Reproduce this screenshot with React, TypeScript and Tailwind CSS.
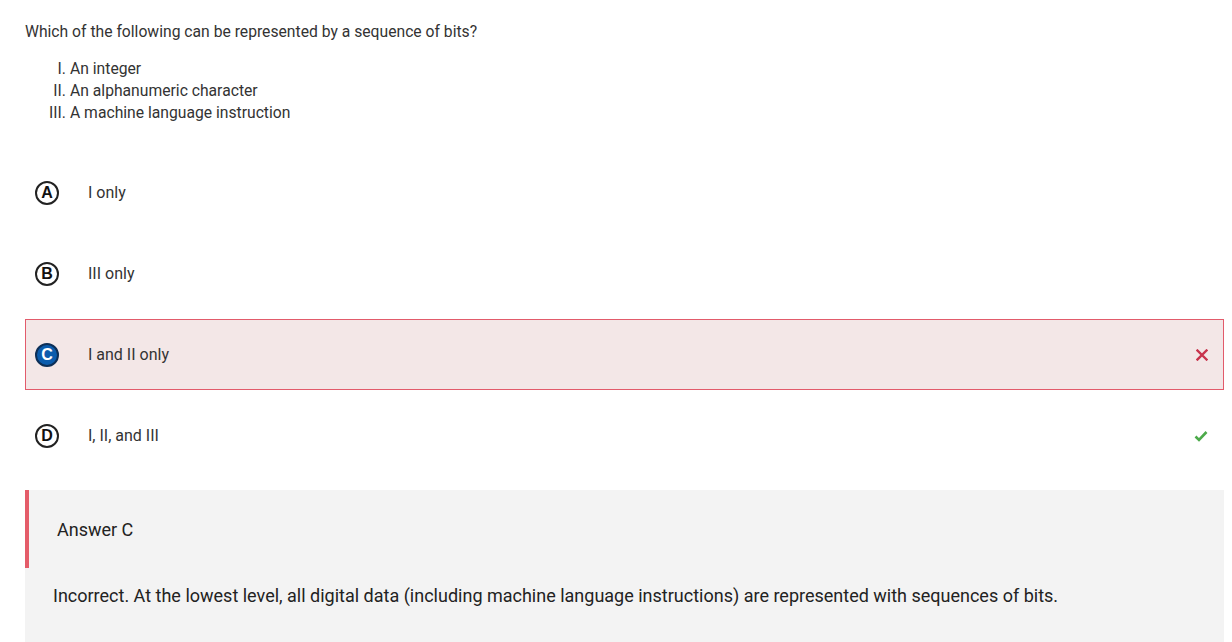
import React from "react";

type Option = {
  letter: string;
  text: string;
  selected?: boolean;
  mark?: "wrong" | "right";
};

const options: Option[] = [
  { letter: "A", text: "I only" },
  { letter: "B", text: "III only" },
  { letter: "C", text: "I and II only", selected: true, mark: "wrong" },
  { letter: "D", text: "I, II, and III", mark: "right" },
];

const statements = [
  { num: "I.", text: "An integer" },
  { num: "II.", text: "An alphanumeric character" },
  { num: "III.", text: "A machine language instruction" },
];

function LetterBadge({ letter, selected }: { letter: string; selected?: boolean }) {
  return (
    <div
      className={
        selected
          ? "w-[24px] h-[24px] rounded-full bg-[#0b5cad] border-2 border-[#0d2f57] flex items-center justify-center text-white font-bold text-[16px] shrink-0"
          : "w-[24px] h-[24px] rounded-full bg-white border-2 border-[#222] flex items-center justify-center text-[#111] font-bold text-[16px] shrink-0"
      }
      style={{ fontFamily: "'Liberation Sans', Arial, sans-serif" }}
    >
      {letter}
    </div>
  );
}

export default function App() {
  return (
    <div className="bg-white min-h-[642px] w-[1232px] overflow-hidden" style={{ fontFamily: "Roboto, 'Liberation Sans', sans-serif" }}>
      <div className="ml-[25px] w-[1199px] pt-[21px]">
        {/* Question */}
        <p className="text-[15.7px] leading-[22px] text-[#333]">
          Which of the following can be represented by a sequence of bits?
        </p>

        <div className="mt-[15px] text-[15.7px] leading-[22px] text-[#333]">
          {statements.map((s) => (
            <div key={s.num} className="flex">
              <span className="w-[41px] text-right">{s.num}</span>
              <span className="ml-[4px]">{s.text}</span>
            </div>
          ))}
        </div>

        {/* Options */}
        <div className="mt-[33px] flex flex-col gap-[10px]">
          {options.map((o) => (
            <div
              key={o.letter}
              className={
                o.selected
                  ? "h-[71px] flex items-center pl-[10px] pr-[16px] ring-1 ring-inset ring-[#e25b6b] bg-[#f3e7e7]"
                  : "h-[71px] flex items-center pl-[10px] pr-[16px]"
              }
            >
              <LetterBadge letter={o.letter} selected={o.selected} />
              <span className="ml-[29px] text-[16px] text-[#333]">{o.text}</span>
              <div className="ml-auto">
                {o.mark === "wrong" && (
                  <svg width="12" height="12" viewBox="0 0 12 12">
                    <path d="M1.5 1.5 L10.5 10.5 M10.5 1.5 L1.5 10.5" stroke="#c8334c" strokeWidth="2.4" strokeLinecap="square" />
                  </svg>
                )}
                {o.mark === "right" && (
                  <svg width="14" height="12" viewBox="0 0 14 12">
                    <path d="M1.5 6.5 L5 10 L12.5 2" stroke="#4caa4a" strokeWidth="2.6" fill="none" />
                  </svg>
                )}
              </div>
            </div>
          ))}
        </div>

        {/* Answer */}
        <div className="mt-[19px] bg-[#f3f3f3] pb-[40px]">
          <div className="h-[78px] border-l-4 border-[#e45c69] flex items-center pl-[28px]">
            <span className="text-[18px] text-[#222]">Answer C</span>
          </div>
          <p className="pl-[28px] pt-[14px] text-[18px] text-[#222]">
            Incorrect. At the lowest level, all digital data (including machine language instructions) are represented with sequences of bits.
          </p>
        </div>
      </div>
    </div>
  );
}
